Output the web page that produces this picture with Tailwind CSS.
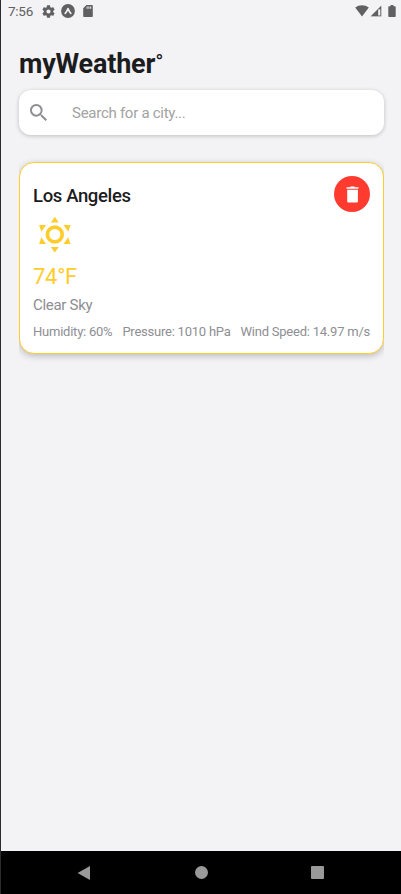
<!DOCTYPE html>
<html lang="en">
<head>
<meta charset="utf-8">
<title>myWeather</title>
<script src="https://cdn.jsdelivr.net/npm/@tailwindcss/browser@4"></script>
</head>
<body class="w-[401px] h-[894px] overflow-hidden bg-[#f3f3f6] font-['Roboto',sans-serif]">
<div class="flex h-[894px] flex-col border-l border-[#2c2b2f]">
  <header class="flex h-[22px] shrink-0 items-center pl-[7px] text-[#606062]">
    <span class="w-[34px] text-[13.5px] leading-[22px] tracking-[-0.25px] whitespace-nowrap">7:56</span>
    <svg class="h-[13px] w-[13px]" viewBox="2 2 20 20" fill="currentColor"><path d="M19.14 12.94c.04-.3.06-.61.06-.94s-.02-.64-.07-.94l2.03-1.58a.5.5 0 0 0 .12-.61l-1.92-3.32a.49.49 0 0 0-.59-.22l-2.39.96a7 7 0 0 0-1.62-.94l-.36-2.54a.48.48 0 0 0-.48-.41h-3.84a.48.48 0 0 0-.47.41l-.36 2.54c-.59.24-1.13.57-1.62.94l-2.39-.96a.48.48 0 0 0-.59.22L2.74 8.87a.47.47 0 0 0 .12.61l2.03 1.58c-.05.3-.09.63-.09.94s.02.64.07.94l-2.03 1.58a.5.5 0 0 0-.12.61l1.92 3.32c.12.22.37.29.59.22l2.39-.96c.5.38 1.03.7 1.62.94l.36 2.54c.05.24.24.41.48.41h3.84c.24 0 .44-.17.47-.41l.36-2.54a7 7 0 0 0 1.62-.94l2.39.96c.22.08.47 0 .59-.22l1.92-3.32a.47.47 0 0 0-.12-.61zM12 15.2a3.2 3.2 0 1 1 0-6.4 3.2 3.2 0 0 1 0 6.4z"/></svg>
    <svg class="ml-[6px] h-[14px] w-[14px]" viewBox="0 0 14 14"><circle cx="7" cy="7" r="6.9" fill="currentColor"/><path d="M4.200 9.400Q5.600 8 7 4.600Q8.400 8 9.800 9.400" fill="none" stroke="#f3f3f6" stroke-width="1.600" stroke-linecap="round" stroke-linejoin="round"/></svg>
    <svg class="ml-[8px] h-[12px] w-[10px]" viewBox="0 0 10 12" fill="currentColor"><path fill-rule="evenodd" d="M3.4 0H9q.8 0 .8.8v10.4q0 .8-.8.8H1q-.8 0-.8-.8V3.2zM3.6 1.6v2.2h1V1.6zm1.8 0v2.2h1V1.6zm1.8 0v2.2h1V1.6z"/></svg>
    <svg class="ml-auto h-[12px] w-[14px]" viewBox="0 0 14 12" fill="currentColor"><path d="M7 11.5L.2 2.6Q3.2.3 7 .3t6.8 2.3z"/></svg>
    <svg class="ml-[1px] h-[12px] w-[12px]" viewBox="0 0 12 12"><path d="M11.5.5v11H.5z" fill="#c9c9cc"/><path d="M11.2.8v10.4H.8z" fill="currentColor"/><path d="M8.2 4.4h2.1v6.1H8.2z" fill="#f3f3f6"/></svg>
    <svg class="mr-[5px] ml-[6px] h-[12px] w-[8px]" viewBox="0 0 8 12" fill="currentColor"><path d="M2.6 0h2.8v1.2H7q.7 0 .7.7v9.4q0 .7-.7.7H1q-.7 0-.7-.7V1.900q0-.7.7-.7h1.600z"/></svg>
  </header>

  <main class="flex min-h-0 flex-1 flex-col pl-[18px] pr-[17px]">
    <h1 class="mt-[25px] flex h-[34px] text-[27px] leading-[35px] font-bold tracking-[-0.2px] whitespace-nowrap text-[#1c1c1e]">myWeather<span class="text-[22px] leading-[31px] font-normal">°</span></h1>
    <div class="mt-[9px] flex h-[45px] shrink-0 items-center rounded-[12px] bg-white pl-[11px] shadow-[0_1px_4px_rgba(0,0,0,0.22)]">
      <svg class="h-[17px] w-[17px] -mt-px" viewBox="3 3 17.490 17.490" fill="#8e8e93"><path d="M15.500 14h-.790l-.280-.270A6.471 6.471 0 0 0 16 9.500 6.500 6.500 0 1 0 9.500 16c1.610 0 3.090-.590 4.230-1.570l.270.280v.790l5 4.990L20.490 19l-4.990-5zm-6 0C7.010 14 5 11.990 5 9.500S7.010 5 9.500 5 14 7.010 14 9.500 11.990 14 9.500 14z"/></svg>
      <span class="mt-px ml-[25px] text-[15px] tracking-[-0.27px] whitespace-nowrap text-[#a2a2a2]">Search for a city...</span>
    </div>

    <div class="-mt-px overflow-hidden pt-[28px] pb-[12px]">
      <section class="flex h-[192px] flex-col rounded-[15px] border border-[#ffcc2e] bg-white px-[13px] shadow-[0_2px_7px_rgba(0,0,0,0.24)]">
        <div class="flex h-[54px] items-start justify-between">
          <h2 class="mt-[21px] text-[18.5px] leading-[24px] font-medium tracking-[-0.36px] whitespace-nowrap text-[#1c1c1e]">Los Angeles</h2>
          <div class="mt-[13px] flex h-[36px] w-[36px] items-center justify-center rounded-full bg-[#ff3b30]">
            <svg class="h-[17px] w-[13px]" viewBox="0 0 13 17" fill="white"><path d="M.500 1.300h3.300L4.700.400h3.600l.9.900h3.300v1.500H.500zM1.200 3.800h10.700v11.400q0 1.300-1.300 1.300H2.500q-1.300 0-1.300-1.300z"/></svg>
          </div>
        </div>
        <svg class="ml-[5px] h-[36px] w-[34px] shrink-0" viewBox="-.500 0 34 36" fill="#ffcc2e"><circle cx="16.300" cy="17.500" r="7.400" fill="none" stroke="#ffcc2e" stroke-width="3.700"/><path d="M16.300-.200l4 5.800h-8zM16.300 35.400l4-5.500h-8zM.600 8h7L2.900 14.800zM32 8h-7L29.700 14.800zM.600 27h7L2.900 20.200zM32 27h-7L29.700 20.200z"/></svg>
        <p class="mt-[10px] text-[22px] leading-[28px] tracking-[-0.3px] text-[#ffcc2e]">74°F</p>
        <p class="mt-[4px] text-[15px] leading-[20px] tracking-[-0.3px] text-[#8e8e93]">Clear Sky</p>
        <div class="mt-[8px] flex justify-between text-[13px] leading-[18px] tracking-[-0.23px] whitespace-nowrap text-[#8e8e93]">
          <span>Humidity: 60%</span><span>Pressure: 1010 hPa</span><span>Wind Speed: 14.97 m/s</span>
        </div>
      </section>
    </div>
  </main>

  <nav class="flex h-[43px] shrink-0 items-center bg-black text-[#999]">
    <svg class="ml-[76px] h-[16px] w-[14px]" viewBox="0 0 14 16" fill="currentColor"><path d="M.600 8L13 .900v14.200z"/></svg>
    <span class="ml-[104px] h-[13px] w-[13px] rounded-full bg-[#999]"></span>
    <span class="ml-[103px] h-[13px] w-[13px] rounded-[1px] bg-[#999]"></span>
  </nav>
</div>
</body>
</html>
